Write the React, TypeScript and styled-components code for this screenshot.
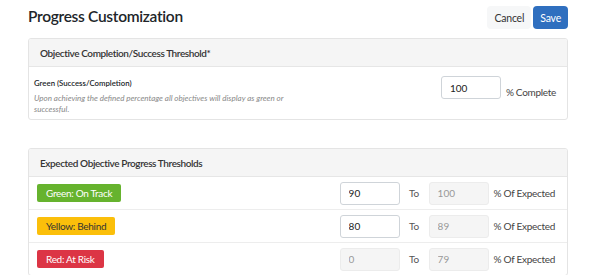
import React from "react";
import styled, { createGlobalStyle } from "styled-components";

const GlobalStyle = createGlobalStyle`
  body {
    margin: 0;
    background: #fff;
    font-family: Lato, "Open Sans", sans-serif;
    color: #212529;
  }
`;

const Page = styled.div`
  padding: 6px 27px 0 28px;
`;

const TopBar = styled.div`
  display: flex;
  align-items: flex-start;
  justify-content: space-between;
  height: 32px;
`;

const Title = styled.h1`
  margin: 0;
  font-size: 15.5px;
  font-weight: 600;
  letter-spacing: -0.3px;
  line-height: 20px;
`;

const Actions = styled.div`
  display: flex;
  gap: 2px;
`;

const Button = styled.button<{ $primary?: boolean }>`
  height: 23px;
  padding: 0 7px;
  border: none;
  border-radius: 4px;
  font-family: inherit;
  font-size: 10.5px;
  letter-spacing: -0.2px;
  background: ${(p) => (p.$primary ? "#2f6fbf" : "#f6f7f8")};
  color: ${(p) => (p.$primary ? "#fff" : "#333")};
`;

const Card = styled.section`
  border: 1px solid #e4e4e4;
  border-radius: 3px;
  overflow: hidden;
  margin-bottom: 28px;
`;

const CardHeader = styled.div`
  background: #f5f5f5;
  border-bottom: 1px solid #e6e6e6;
  padding: 0 11px;
  height: 27px;
  display: flex;
  align-items: center;
  font-size: 10px;
  font-weight: 600;
  letter-spacing: -0.4px;
  color: #333;
`;

const CompletionBody = styled.div`
  display: flex;
  align-items: flex-start;
  justify-content: space-between;
  height: 52px;
  box-sizing: border-box;
  padding: 9px 0 0 5px;
`;

const Label = styled.div`
  font-size: 7.8px;
  font-weight: 600;
  margin-top: 2px;
  margin-bottom: 5px;
`;

const Help = styled.div`
  font-size: 8px;
  font-style: italic;
  color: #888;
  line-height: 11px;
  width: 265px;
`;

const InputGroup = styled.div`
  display: flex;
  align-items: center;
  gap: 5px;
  padding-right: 11px;
`;

const NumberInput = styled.input<{ disabled?: boolean }>`
  box-sizing: border-box;
  width: 60px;
  height: 23px;
  padding: 0 8px;
  border: 1px solid ${(p) => (p.disabled ? "#ececec" : "#cfd4d9")};
  border-radius: 3px;
  background: ${(p) => (p.disabled ? "#f5f5f5" : "#fff")};
  color: ${(p) => (p.disabled ? "#999" : "#222")};
  font-family: inherit;
  font-size: 10px;
`;

const Unit = styled.span`
  font-size: 10px;
  letter-spacing: -0.3px;
  color: #444;
`;

const CompleteUnit = styled(Unit)`
  margin-top: 9px;
`;

const Row = styled.div`
  display: flex;
  align-items: center;
  justify-content: space-between;
  height: 32px;
  padding: 0 12px 0 8px;
  border-bottom: 1px solid #ededed;
  &:last-child {
    border-bottom: none;
  }
`;

const Badge = styled.span<{ $bg: string; $fg: string }>`
  display: inline-flex;
  align-items: center;
  height: 18px;
  padding: 0 9px;
  border-radius: 2px;
  background: ${(p) => p.$bg};
  color: ${(p) => p.$fg};
  font-size: 10px;
  letter-spacing: -0.3px;
`;

const RangeGroup = styled.div`
  display: flex;
  align-items: center;
`;

const To = styled.span`
  font-size: 10px;
  color: #555;
  width: 29px;
  text-align: center;
`;

const Expected = styled(Unit)`
  margin-left: 5px;
`;

const rows = [
  { label: "Green: On Track", bg: "#66b32e", fg: "#fff", from: "90", fromDisabled: false, to: "100" },
  { label: "Yellow: Behind", bg: "#fbbf0a", fg: "#333", from: "80", fromDisabled: false, to: "89" },
  { label: "Red: At Risk", bg: "#dc3545", fg: "#fff", from: "0", fromDisabled: true, to: "79" },
];

export default function App() {
  return (
    <Page>
      <GlobalStyle />
      <TopBar>
        <Title>Progress Customization</Title>
        <Actions>
          <Button>Cancel</Button>
          <Button $primary>Save</Button>
        </Actions>
      </TopBar>
      <Card>
        <CardHeader>Objective Completion/Success Threshold*</CardHeader>
        <CompletionBody>
          <div>
            <Label>Green (Success/Completion)</Label>
            <Help>
              Upon achieving the defined percentage all objectives will display as green or
              successful.
            </Help>
          </div>
          <InputGroup>
            <NumberInput defaultValue="100" />
            <CompleteUnit>% Complete</CompleteUnit>
          </InputGroup>
        </CompletionBody>
      </Card>
      <Card>
        <CardHeader>Expected Objective Progress Thresholds</CardHeader>
        {rows.map((r) => (
          <Row key={r.label}>
            <Badge $bg={r.bg} $fg={r.fg}>
              {r.label}
            </Badge>
            <RangeGroup>
              <NumberInput defaultValue={r.from} disabled={r.fromDisabled} />
              <To>To</To>
              <NumberInput defaultValue={r.to} disabled />
              <Expected>% Of Expected</Expected>
            </RangeGroup>
          </Row>
        ))}
      </Card>
    </Page>
  );
}
